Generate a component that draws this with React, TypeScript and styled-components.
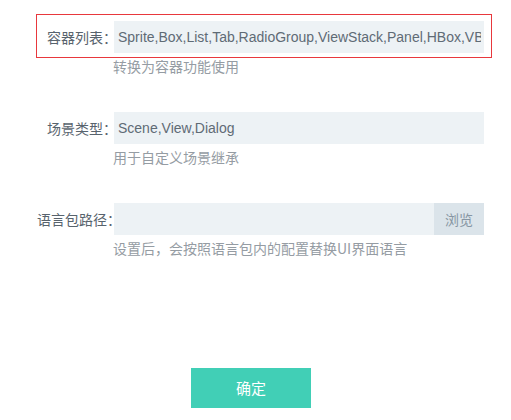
import React from "react";
import styled, { createGlobalStyle } from "styled-components";

const Global = createGlobalStyle`
  html, body { margin: 0; padding: 0; background: #ffffff; }
  body { font-family: "Noto Sans CJK SC", "Liberation Sans", sans-serif; }
`;

const Page = styled.div`
  width: 511px;
  height: 420px;
  padding-top: 14px;
  box-sizing: border-box;
  display: flex;
  flex-direction: column;
`;

const Item = styled.div<{ $gap: number }>`
  display: flex;
  flex-direction: column;
  margin-top: ${(p) => p.$gap}px;
`;

const Field = styled.div<{ $active?: boolean }>`
  margin-left: 36px;
  width: 456px;
  box-sizing: border-box;
  border: 1px solid ${(p) => (p.$active ? "#e8383d" : "transparent")};
  padding: 6px 7px 4px 0;
  display: flex;
  align-items: center;
`;

const Label = styled.div`
  width: 80px;
  margin-right: -3px;
  text-align: right;
  font-size: 14px;
  color: #58636d;
  white-space: nowrap;
  font-family: "Noto Sans CJK SC", sans-serif;
`;

const InputBox = styled.div`
  flex: 1;
  height: 32px;
  background: #edf2f5;
  display: flex;
  align-items: stretch;
  overflow: hidden;
`;

const InputText = styled.div`
  flex: 1;
  margin: 0 3px 0 4px;
  font-family: "Liberation Sans", Arial, sans-serif;
  font-size: 14px;
  line-height: 32px;
  color: #5f6b75;
  white-space: nowrap;
  overflow: hidden;
`;

const Browse = styled.div`
  width: 50px;
  background: #dbe4ea;
  color: #8796a3;
  font-size: 14px;
  line-height: 32px;
  text-align: center;
  font-family: "Noto Sans CJK SC", sans-serif;
`;

const Hint = styled.div<{ $shift?: number }>`
  margin-left: 113px;
  margin-top: ${(p) => p.$shift ?? 0}px;
  font-size: 14px;
  line-height: 18px;
  color: #959ca3;
  white-space: nowrap;
`;

const Confirm = styled.div`
  margin-left: 191px;
  margin-top: 111px;
  width: 120px;
  height: 40px;
  background: #41cfb6;
  color: #ffffff;
  font-size: 15px;
  line-height: 40px;
  text-align: center;
`;

export default function App() {
  return (
    <>
      <Global />
      <Page>
        <Item $gap={0}>
          <Field $active>
            <Label>容器列表：</Label>
            <InputBox>
              <InputText>Sprite,Box,List,Tab,RadioGroup,ViewStack,Panel,HBox,VBox,Tree</InputText>
            </InputBox>
          </Field>
          <Hint $shift={-1}>转换为容器功能使用</Hint>
        </Item>
        <Item $gap={30}>
          <Field>
            <Label>场景类型：</Label>
            <InputBox>
              <InputText>Scene,View,Dialog</InputText>
            </InputBox>
          </Field>
          <Hint $shift={-1}>用于自定义场景继承</Hint>
        </Item>
        <Item $gap={30}>
          <Field>
            <Label>语言包路径：</Label>
            <InputBox>
              <InputText></InputText>
              <Browse>浏览</Browse>
            </InputBox>
          </Field>
          <Hint $shift={-1}>设置后，会按照语言包内的配置替换UI界面语言</Hint>
        </Item>
        <Confirm>确定</Confirm>
      </Page>
    </>
  );
}
